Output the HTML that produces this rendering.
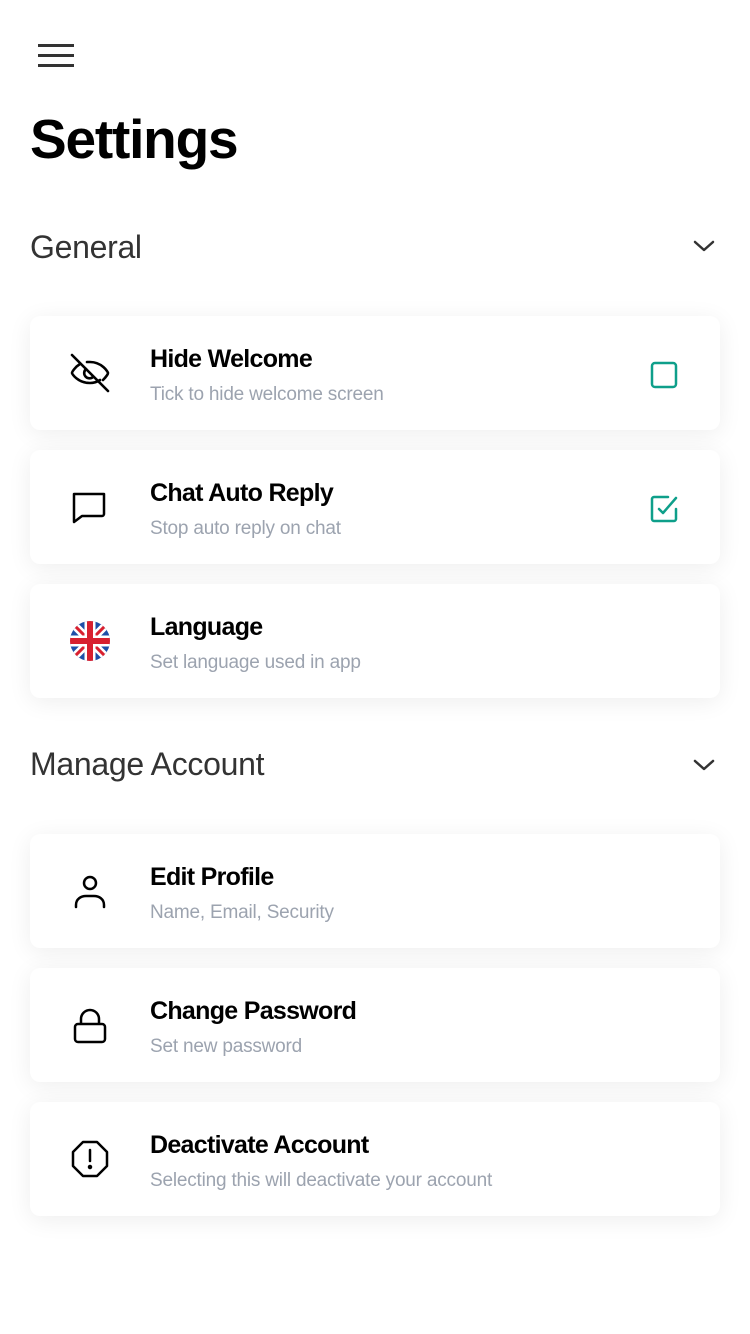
<!DOCTYPE html>
<html><head><meta charset="utf-8"><style>
*{margin:0;padding:0;box-sizing:border-box}
body{width:750px;height:1334px;background:#fff;font-family:"Liberation Sans",sans-serif;position:relative;overflow:hidden;color:#000}
.menu{position:absolute;left:38px;top:44px;width:36px}
.menu i{display:block;height:3px;background:#333;margin-bottom:7px}
h1{position:absolute;left:30px;top:107px;font-size:55px;font-weight:bold;letter-spacing:-1.2px}
.sec{position:absolute;left:30px;font-size:32px;color:#333;letter-spacing:-0.3px}
.chev{position:absolute;left:692px}
.card{position:absolute;left:30px;width:690px;height:114px;background:#fff;border-radius:10px;box-shadow:0 4px 24px rgba(0,0,0,0.07)}
.card svg.ic{position:absolute;left:40px;top:37px}
.t{position:absolute;left:120px;top:29px;font-size:25px;font-weight:bold;letter-spacing:-0.7px}
.s{position:absolute;left:120px;top:68px;font-size:19px;color:#9ca3af;letter-spacing:-0.2px}
.cb{position:absolute;left:620px;top:45px}
</style></head><body>
<div class="menu"><i></i><i></i><i></i></div>
<h1>Settings</h1>
<div class="sec" style="top:229px">General</div>
<svg class="chev" style="top:238px" width="24" height="16" viewBox="0 0 24 16"><path d="M3 4l9 8 9-8" fill="none" stroke="#333" stroke-width="2.5" stroke-linecap="round" stroke-linejoin="round"/></svg>

<div class="card" style="top:316px">
<svg class="ic" width="40" height="40" viewBox="0 0 40 40" fill="none" stroke="#000" stroke-width="2.6" stroke-linecap="round" stroke-linejoin="round"><path d="M2 2l36 36"/><path d="M10 11C5 14 2 19 2 20c0 1 6 10 18 10 4 0 7-1 10-3M17 9c1 0 2 0 3 0 12 0 18 10 18 11 0 1-2 4-5 7"/><path d="M16 16a5 5 0 007 8"/></svg>
<div class="t">Hide Welcome</div><div class="s">Tick to hide welcome screen</div>
<svg class="cb" width="28" height="28" viewBox="0 0 28 28"><rect x="2" y="2" width="24" height="24" rx="3" fill="none" stroke="#0e9f8a" stroke-width="2.5"/></svg>
</div>

<div class="card" style="top:450px">
<svg class="ic" width="40" height="40" viewBox="0 0 40 40" fill="none" stroke="#000" stroke-width="2.5" stroke-linejoin="round"><path d="M4 7h30a0 0 0 010 0v20a2 2 0 01-2 2H12l-8 6z" /></svg>
<div class="t">Chat Auto Reply</div><div class="s">Stop auto reply on chat</div>
<svg class="cb" width="28" height="28" viewBox="0 0 28 28" fill="none" stroke="#0e9f8a" stroke-width="2.5" stroke-linecap="round" stroke-linejoin="round"><path d="M18 2H4a2 2 0 00-2 2v20a2 2 0 002 2h20a2 2 0 002-2v-10"/><path d="M9 14l4 4 13-15"/></svg>
</div>

<div class="card" style="top:584px">
<svg class="ic" width="40" height="40" viewBox="0 0 40 40"><defs><clipPath id="c"><circle cx="20" cy="20" r="20"/></clipPath></defs><g clip-path="url(#c)"><rect width="40" height="40" fill="#1e4fa8"/><path d="M0 0L40 40M40 0L0 40" stroke="#fff" stroke-width="8"/><path d="M0 0L40 40M40 0L0 40" stroke="#d8202f" stroke-width="3"/><path d="M20 0v40M0 20h40" stroke="#fff" stroke-width="11"/><path d="M20 0v40M0 20h40" stroke="#d8202f" stroke-width="6"/></g></svg>
<div class="t">Language</div><div class="s">Set language used in app</div>
</div>

<div class="sec" style="top:746px">Manage Account</div>
<svg class="chev" style="top:757px" width="24" height="16" viewBox="0 0 24 16"><path d="M3 4l9 8 9-8" fill="none" stroke="#333" stroke-width="2.5" stroke-linecap="round" stroke-linejoin="round"/></svg>

<div class="card" style="top:834px">
<svg class="ic" width="40" height="40" viewBox="0 0 40 40" fill="none" stroke="#000" stroke-width="2.5" stroke-linecap="round"><circle cx="20" cy="12" r="6"/><path d="M6 36v-2c0-6 5-9 10-9h8c5 0 10 3 10 9v2"/></svg>
<div class="t">Edit Profile</div><div class="s">Name, Email, Security</div>
</div>

<div class="card" style="top:968px">
<svg class="ic" width="40" height="40" viewBox="0 0 40 40" fill="none" stroke="#000" stroke-width="2.5" stroke-linejoin="round"><rect x="5" y="19" width="30" height="18" rx="3"/><path d="M11 19v-5a9 9 0 0118 0v5"/></svg>
<div class="t">Change Password</div><div class="s">Set new password</div>
</div>

<div class="card" style="top:1102px">
<svg class="ic" width="40" height="40" viewBox="0 0 40 40" fill="none" stroke="#000" stroke-width="2.5" stroke-linejoin="round" stroke-linecap="round"><path d="M13 3h14l10 10v14L27 37H13L3 27V13z"/><path d="M20 11v11"/><circle cx="20" cy="28" r="1" fill="#000"/></svg>
<div class="t">Deactivate Account</div><div class="s">Selecting this will deactivate your account</div>
</div>
</body></html>
